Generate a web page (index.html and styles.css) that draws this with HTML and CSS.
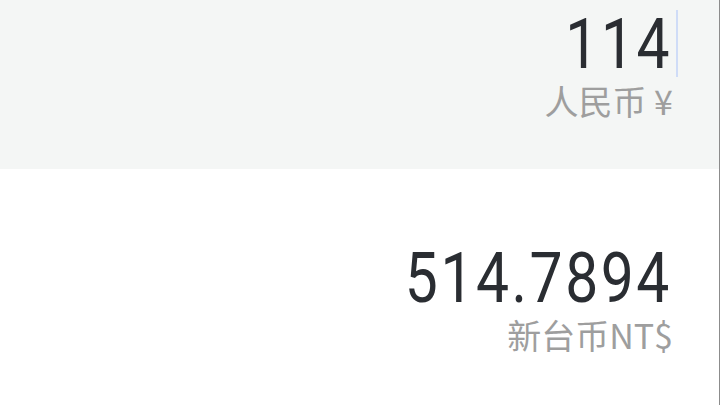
FILE: index.html
```html
<!DOCTYPE html>
<html lang="zh-CN">
<head>
<meta charset="utf-8">
<title>汇率换算</title>
<link rel="stylesheet" href="styles.css">
</head>
<body>
<div class="app">
  <section class="row row-active">
    <div class="amount-wrap">
      <div class="amount">114</div>
      <span class="cursor"></span>
    </div>
    <div class="unit">人民币 ¥</div>
  </section>
  <section class="row row-result">
    <div class="amount-wrap">
      <div class="amount">514.7894</div>
    </div>
    <div class="unit">新台币NT$</div>
  </section>
</div>
</body>
</html>
```
FILE: styles.css
```css
html, body {
  margin: 0;
  padding: 0;
  background: #ffffff;
}
.app {
  width: 720px;
  height: 405px;
  box-sizing: border-box;
  border-right: 1px solid #8c8c8c;
  display: flex;
  flex-direction: column;
  overflow: hidden;
}
.row {
  display: flex;
  flex-direction: column;
  align-items: flex-end;
  padding-right: 48px;
}
.row-active {
  background: #f4f6f5;
  height: 169px;
  box-sizing: border-box;
  padding-top: 9px;
}
.row-result {
  padding-top: 74px;
}
.amount-wrap {
  position: relative;
}
.amount {
  font-family: Roboto, "DejaVu Sans Condensed", sans-serif;
  font-weight: 400;
  font-size: 70px;
  line-height: 70px;
  letter-spacing: 3px;
  margin-right: -1px;
  color: #2a2d32;
  transform: scaleX(0.84);
  transform-origin: right center;
}
.cursor {
  position: absolute;
  right: -7px;
  top: 1px;
  width: 2px;
  height: 67px;
  background: #cfdcf7;
}
.unit {
  margin-top: 5px;
  margin-right: -2px;
  font-family: "Noto Sans CJK SC", "Noto Sans", sans-serif;
  font-size: 34px;
  line-height: 34px;
  color: #9e9e9e;
}
```
